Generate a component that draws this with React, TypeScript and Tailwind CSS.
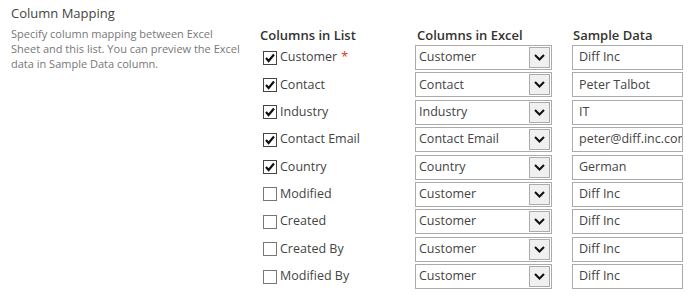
import React from "react";

const rows = [
  { name: "Customer", req: true, checked: true, excel: "Customer", sample: "Diff Inc" },
  { name: "Contact", checked: true, excel: "Contact", sample: "Peter Talbot" },
  { name: "Industry", checked: true, excel: "Industry", sample: "IT" },
  { name: "Contact Email", checked: true, excel: "Contact Email", sample: "peter@diff.inc.com" },
  { name: "Country", checked: true, excel: "Country", sample: "German" },
  { name: "Modified", checked: false, excel: "Customer", sample: "Diff Inc" },
  { name: "Created", checked: false, excel: "Customer", sample: "Diff Inc" },
  { name: "Created By", checked: false, excel: "Customer", sample: "Diff Inc" },
  { name: "Modified By", checked: false, excel: "Customer", sample: "Diff Inc" },
];

function CheckBox({ checked }: { checked: boolean }) {
  return (
    <svg width="14" height="14" viewBox="0 0 14 14" className="shrink-0">
      <rect x="0.5" y="0.5" width="13" height="13" fill="#fff" stroke={checked ? "#444" : "#777"} />
      {checked && (
        <polyline points="3,7 5.6,10 11,3.5" fill="none" stroke="#111" strokeWidth="2.2" />
      )}
    </svg>
  );
}

function Chevron() {
  return (
    <svg width="11" height="7" viewBox="0 0 11 7">
      <polyline points="1,1 5.5,5.5 10,1" fill="none" stroke="#111" strokeWidth="2" />
    </svg>
  );
}

export default function App() {
  return (
    <div
      className="flex w-[700px] h-[296px] bg-white overflow-hidden"
      style={{ fontFamily: '"Open Sans", "Noto Sans", sans-serif' }}
    >
      <div className="w-[260px] shrink-0 pl-[11px] pt-[4px]">
        <div className="text-[13px] leading-[18px] text-[#444]">Column Mapping</div>
        <div className="mt-[4px] text-[11px] leading-[15px] text-[#777]">
          Specify column mapping between Excel
          <br />
          Sheet and this list. You can preview the Excel
          <br />
          data in Sample Data column.
        </div>
      </div>
      <div className="pt-[26px]">
        <div className="flex h-[19px] items-center text-[13px] font-semibold text-[#333]">
          <div className="w-[156px]">Columns in List</div>
          <div className="w-[157px] pl-[1px]">Columns in Excel</div>
          <div>Sample Data</div>
        </div>
        {rows.map((r, i) => (
          <div key={i} className="flex h-[27.375px] items-start">
            <div className="w-[155px] h-[25px] flex items-center pl-[3px] gap-[3px] text-[12.5px] text-[#444]">
              <CheckBox checked={r.checked} />
              <span>{r.name}</span>
              {r.req && <span className="text-[#e03030] ml-[1px]">*</span>}
            </div>
            <div className="w-[137px] h-[25px] border border-[#ababab] flex items-stretch bg-white">
              <div className="flex-1 flex items-center pl-[3px] text-[12.5px] text-[#444] overflow-hidden whitespace-nowrap">
                {r.excel}
              </div>
              <div className="w-[21px] my-[1px] mr-[1px] border border-[#ababab] bg-[#f0f0f0] flex items-center justify-center">
                <Chevron />
              </div>
            </div>
            <div className="ml-[20px] w-[111px] h-[25px] border border-[#ababab] flex items-center pl-[6px] text-[12.5px] text-[#444] overflow-hidden whitespace-nowrap">
              {r.sample}
            </div>
          </div>
        ))}
      </div>
    </div>
  );
}
